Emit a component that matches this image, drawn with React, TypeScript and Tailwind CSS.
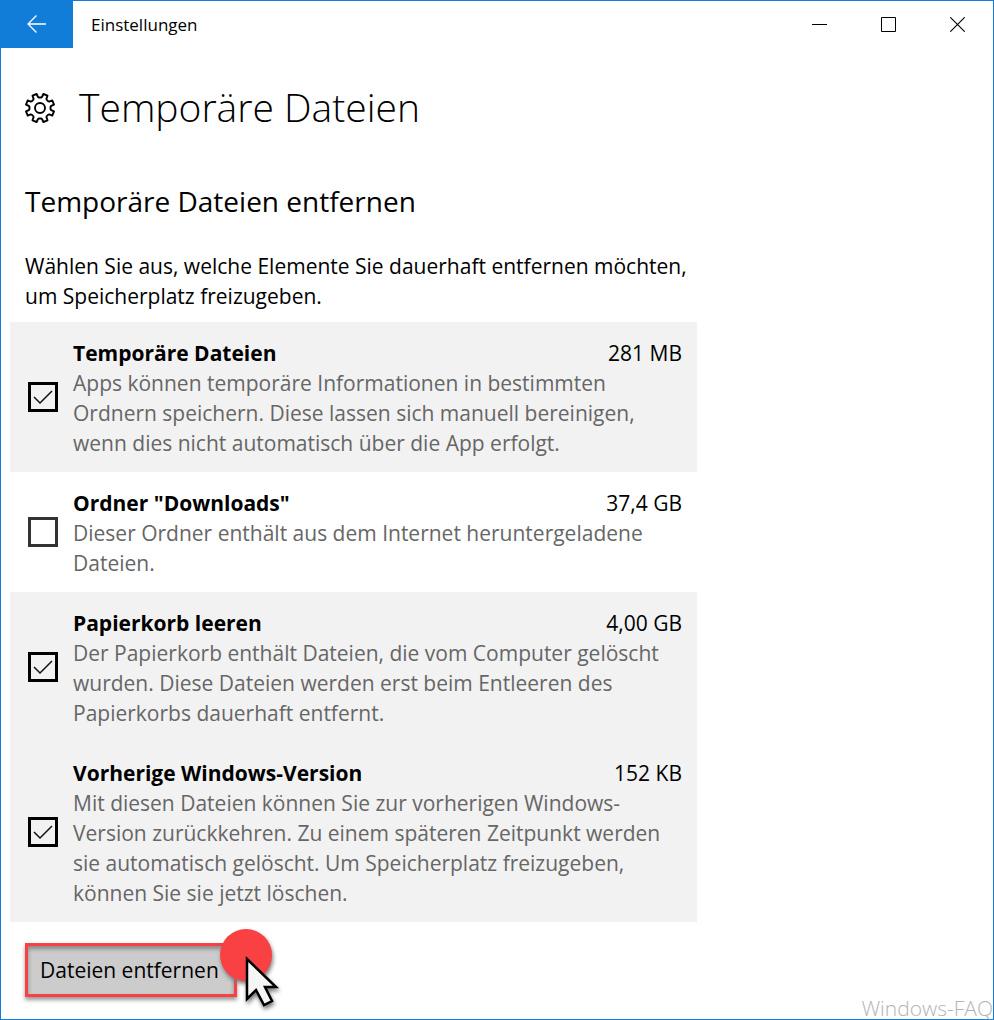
import React, { useState } from "react";

type Entry = { id: string; title: string; size: string; lines: string[]; checked: boolean };

const entries: Entry[] = [
  {
    id: "temp",
    title: "Temporäre Dateien",
    size: "281 MB",
    lines: [
      "Apps können temporäre Informationen in bestimmten",
      "Ordnern speichern. Diese lassen sich manuell bereinigen,",
      "wenn dies nicht automatisch über die App erfolgt.",
    ],
    checked: true,
  },
  {
    id: "downloads",
    title: 'Ordner "Downloads"',
    size: "37,4 GB",
    lines: ["Dieser Ordner enthält aus dem Internet heruntergeladene", "Dateien."],
    checked: false,
  },
  {
    id: "recycle",
    title: "Papierkorb leeren",
    size: "4,00 GB",
    lines: [
      "Der Papierkorb enthält Dateien, die vom Computer gelöscht",
      "wurden. Diese Dateien werden erst beim Entleeren des",
      "Papierkorbs dauerhaft entfernt.",
    ],
    checked: true,
  },
  {
    id: "previous",
    title: "Vorherige Windows-Version",
    size: "152 KB",
    lines: [
      "Mit diesen Dateien können Sie zur vorherigen Windows-",
      "Version zurückkehren. Zu einem späteren Zeitpunkt werden",
      "sie automatisch gelöscht. Um Speicherplatz freizugeben,",
      "können Sie sie jetzt löschen.",
    ],
    checked: true,
  },
];

function gearPath(): string {
  const teeth = 8;
  const points: string[] = [];
  for (let i = 0; i < teeth; i++) {
    const center = (i + 0.5) * (360 / teeth);
    const corners: [number, number][] = [
      [-16, 10.6],
      [-12, 11.4],
      [-9, 14.4],
      [9, 14.4],
      [12, 11.4],
      [16, 10.6],
    ];
    for (const [offset, radius] of corners) {
      const angle = ((center + offset) * Math.PI) / 180;
      points.push(`${(16 + radius * Math.cos(angle)).toFixed(2)} ${(16 + radius * Math.sin(angle)).toFixed(2)}`);
    }
  }
  return `M${points.join("L")}Z`;
}

function EntryRow({ entry }: { entry: Entry }) {
  const [checked, setChecked] = useState(entry.checked);
  return (
    <li className={`flex items-center gap-[15px] pr-[15px] pl-[18px] ${checked ? "bg-[#f2f2f2]" : "bg-white"}`}>
      <span className="grid size-[30px] shrink-0">
        <input
          id={entry.id}
          type="checkbox"
          checked={checked}
          onChange={(e) => setChecked(e.target.checked)}
          className={`col-start-1 row-start-1 size-[30px] appearance-none border-[3px] ${checked ? "border-black" : "border-[#333333]"}`}
        />
        {checked && (
          <svg viewBox="0 0 30 30" className="pointer-events-none col-start-1 row-start-1 size-[30px]" fill="none" stroke="#111" strokeWidth="1.5">
            <path d="M6 15l6 6L24 9" />
          </svg>
        )}
      </span>
      <label htmlFor={entry.id} className="min-w-0 grow pt-4 pb-[14px]">
        <span className="flex justify-between">
          <span className="font-bold">{entry.title}</span>
          <span>{entry.size}</span>
        </span>
        {entry.lines.map((line) => (
          <span key={line} className="block whitespace-nowrap text-[#666666]">
            {line}
          </span>
        ))}
      </label>
    </li>
  );
}

export default function App() {
  return (
    <div className="relative flex min-h-screen flex-col border border-[#127dd8] bg-white font-['Open_Sans',sans-serif] text-[21px] leading-[30px] text-black">
      <header className="flex h-[47px] items-stretch pr-px">
        <button aria-label="Zurück" className="flex w-[72px] items-center justify-center bg-[#127dd8]">
          <svg viewBox="0 0 20 20" className="size-5" fill="none" stroke="#fff" strokeWidth="1.3">
            <path d="M19 9H1.500M9.500 .5L1 9l8.500 8.500" />
          </svg>
        </button>
        <span className="grow self-center pl-[18px] text-[17px]">Einstellungen</span>
        <button aria-label="Minimieren" className="flex w-[69px] items-center justify-center">
          <svg viewBox="0 0 15 15" className="size-[15px]" stroke="#000">
            <path d="M0 7.500h15" />
          </svg>
        </button>
        <button aria-label="Maximieren" className="flex w-[69px] items-center justify-center">
          <svg viewBox="0 0 15 15" className="size-[15px]" fill="none" stroke="#000">
            <path d="M.5 .5h14v14H.5z" />
          </svg>
        </button>
        <button aria-label="Schließen" className="flex w-[69px] items-center justify-center">
          <svg viewBox="0 0 15 15" className="size-[15px]" stroke="#000" strokeWidth="1.1">
            <path d="M.3 .3l14.400 14.400M14.700 .3L.3 14.700" />
          </svg>
        </button>
      </header>
      <main className="max-w-[696px] pl-[9px]">
        <div className="flex h-[120px] items-center gap-[23px] pl-[14px]">
          <svg viewBox="0 0 32 32" className="size-8 shrink-0" fill="none" stroke="#000" strokeWidth="1.900" strokeLinejoin="round">
            <path d={gearPath()} />
            <circle cx="16" cy="16" r="5" />
          </svg>
          <h1 className="pb-[3px] text-[39px] leading-[60px] font-light">Temporäre Dateien</h1>
        </div>
        <h2 className="pl-[15px] text-[28px] leading-[66px]">Temporäre Dateien entfernen</h2>
        <p className="pt-[17px] pb-[11px] pl-[15px] whitespace-nowrap">
          Wählen Sie aus, welche Elemente Sie dauerhaft entfernen möchten,
          <br />
          um Speicherplatz freizugeben.
        </p>
        <ul>
          {entries.map((entry) => (
            <EntryRow key={entry.id} entry={entry} />
          ))}
        </ul>
        <div className="relative mt-[21px] ml-[15px] w-fit">
          <button className="h-[54px] border-[3px] border-[#f94144] bg-[#cccccc] pr-[15px] pl-3 shadow-[inset_0_3px_4px_#888888,0_3px_4px_#999999]">
            Dateien entfernen
          </button>
          <svg viewBox="0 0 70 90" className="pointer-events-none absolute -top-[18px] left-[190px] h-[90px] w-[70px] drop-shadow-[1px_3px_2px_#777777]">
            <circle cx="31" cy="30" r="26" fill="#f94144" />
            <path d="M32 34v40l9-9 8 15 8-4-7-14h11z" fill="#f5f5f5" stroke="#000" strokeWidth="2.500" />
          </svg>
        </div>
      </main>
      <span className="pointer-events-none absolute right-0 bottom-0 text-[21px] leading-[22px] font-light text-[#b4b4b4]">Windows-FAQ</span>
    </div>
  );
}
